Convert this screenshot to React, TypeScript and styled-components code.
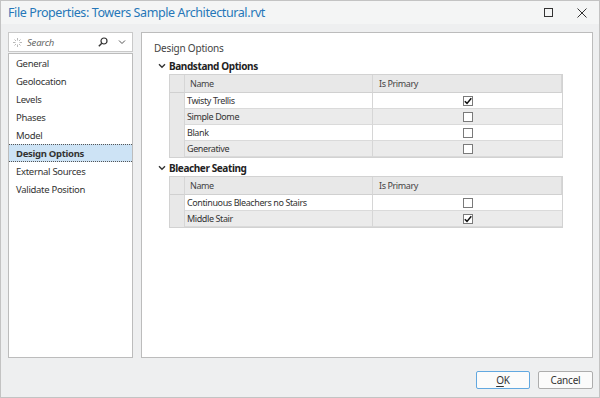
import styled, { createGlobalStyle } from "styled-components";

const GlobalStyle = createGlobalStyle`
  html, body {
    margin: 0;
    padding: 0;
    background: #ffffff;
  }
  body {
    font-family: "Noto Sans", "Open Sans", sans-serif;
    color: #222;
  }
`;

const Window = styled.div`
  width: 600px;
  height: 398px;
  box-sizing: border-box;
  border: 1px solid #c3c3c3;
  background: #eeeff0;
  display: flex;
  flex-direction: column;
`;

const TitleBar = styled.div`
  height: 23px;
  display: flex;
  align-items: center;
  padding-left: 7px;
  background: #f4f5f5;
`;

const Title = styled.div`
  flex: 1;
  font-size: 12.5px;
  letter-spacing: -0.4px;
  color: #2677b8;
`;

const WinButton = styled.button`
  width: 34px;
  height: 23px;
  border: none;
  background: transparent;
  display: flex;
  align-items: center;
  justify-content: center;
  padding: 0;
`;

const Body = styled.div`
  flex: 1;
  padding: 8px 6px 0 7px;
  display: flex;
  flex-direction: column;
`;

const Main = styled.div`
  height: 326px;
  display: flex;
  gap: 8px;
`;

const Side = styled.div`
  width: 125px;
  display: flex;
  flex-direction: column;
  gap: 1px;
`;

const SearchBox = styled.div`
  height: 20px;
  box-sizing: border-box;
  border: 1px solid #c9c9c9;
  background: #fff;
  display: flex;
  align-items: center;
  padding: 0 4px 0 4px;
  gap: 5px;
`;

const SearchText = styled.span`
  flex: 1;
  font-size: 9.5px;
  letter-spacing: -0.2px;
  font-style: italic;
  color: #666;
`;

const Nav = styled.div`
  flex: 1;
  border: 1px solid #bcbcbc;
  background: #fff;
`;

const NavItem = styled.div<{ $active?: boolean }>`
  height: 18px;
  box-sizing: border-box;
  display: flex;
  align-items: center;
  padding-left: 7px;
  font-size: 9.5px;
  letter-spacing: -0.3px;
  color: #333;
  font-weight: ${(p) => (p.$active ? 700 : 400)};
  background: ${(p) => (p.$active ? "#cde3f5" : "transparent")};
  border: 1px dotted ${(p) => (p.$active ? "#555" : "transparent")};
  border-left: none;
  border-right: none;
`;

const Panel = styled.div`
  flex: 1;
  border: 1px solid #bcbcbc;
  background: #fff;
  padding: 7px 0 0 12px;
`;

const PanelTitle = styled.div`
  font-size: 10px;
  letter-spacing: -0.2px;
  color: #444;
  height: 16px;
  line-height: 16px;
  margin-bottom: 2px;
`;

const Group = styled.div`
  margin-bottom: 2px;
`;

const GroupHead = styled.div`
  height: 16px;
  display: flex;
  align-items: center;
  gap: 3px;
  padding-left: 4px;
  font-size: 10px;
  letter-spacing: -0.4px;
  font-weight: 700;
  color: #222;
`;

const Table = styled.div`
  margin-left: 15px;
  width: 394px;
  box-sizing: border-box;
  border: 1px solid #d2d2d2;
  background: #e8e8e8;
  display: grid;
  grid-template-columns: 15px 188px 1fr;
  font-size: 9px;
  letter-spacing: -0.4px;
  color: #333;
`;

const HeadCell = styled.div<{ $pad?: number }>`
  height: 17px;
  display: flex;
  align-items: center;
  padding-left: ${(p) => p.$pad ?? 0}px;
  border-right: 1px solid #d6d6d6;
  border-bottom: 1px solid #d0d0d0;
  color: #444;
  &:last-child {
    border-right: none;
  }
`;

const Gutter = styled.div`
  background: #e8e8e8;
  border-right: 1px solid #d6d6d6;
`;

const Cell = styled.div<{ $alt?: boolean; $center?: boolean }>`
  height: 16px;
  box-sizing: border-box;
  display: flex;
  align-items: center;
  justify-content: ${(p) => (p.$center ? "center" : "flex-start")};
  padding-left: ${(p) => (p.$center ? 0 : 2)}px;
  background: ${(p) => (p.$alt ? "#ebebeb" : "#ffffff")};
  border-bottom: 1px solid #dadada;
  border-right: ${(p) => (p.$center ? "none" : "1px solid #d6d6d6")};
`;

const Box = styled.span`
  width: 10px;
  height: 10px;
  box-sizing: border-box;
  border: 1px solid #7a7a7a;
  background: #fff;
  display: flex;
  align-items: center;
  justify-content: center;
`;

const Footer = styled.div`
  display: flex;
  justify-content: flex-end;
  gap: 8px;
  padding-top: 13px;
`;

const Button = styled.button<{ $primary?: boolean }>`
  width: ${(p) => (p.$primary ? 54 : 55)}px;
  height: 18px;
  box-sizing: border-box;
  border: 1px solid ${(p) => (p.$primary ? "#62a8e0" : "#adadad")};
  border-radius: 2px;
  background: #fbfbfb;
  font-family: inherit;
  font-size: 10px;
  letter-spacing: -0.2px;
  color: #333;
  padding: 0;
  line-height: 1;

  u {
    text-decoration-thickness: 1px;
    text-underline-offset: 2px;
  }
`;

function Check() {
  return (
    <svg width="8" height="8" viewBox="0 0 8 8">
      <path d="M0.8 4.2 L3 6.4 L7.3 1.2" fill="none" stroke="#111" strokeWidth="1.5" />
    </svg>
  );
}

function Chevron() {
  return (
    <svg width="8" height="6" viewBox="0 0 8 6">
      <path d="M1 1.2 L4 4.2 L7 1.2" fill="none" stroke="#333" strokeWidth="1.4" />
    </svg>
  );
}

interface Option {
  name: string;
  primary: boolean;
}

const groups: { title: string; options: Option[] }[] = [
  {
    title: "Bandstand Options",
    options: [
      { name: "Twisty Trellis", primary: true },
      { name: "Simple Dome", primary: false },
      { name: "Blank", primary: false },
      { name: "Generative", primary: false },
    ],
  },
  {
    title: "Bleacher Seating",
    options: [
      { name: "Continuous Bleachers no Stairs", primary: false },
      { name: "Middle Stair", primary: true },
    ],
  },
];

const navItems = [
  "General",
  "Geolocation",
  "Levels",
  "Phases",
  "Model",
  "Design Options",
  "External Sources",
  "Validate Position",
];

export default function App() {
  return (
    <>
      <GlobalStyle />
      <Window>
        <TitleBar>
          <Title>File Properties: Towers Sample Architectural.rvt</Title>
          <WinButton>
            <svg width="9" height="9" viewBox="0 0 9 9">
              <rect x="0.5" y="0.5" width="8" height="8" fill="none" stroke="#333" strokeWidth="1" />
            </svg>
          </WinButton>
          <WinButton>
            <svg width="10" height="10" viewBox="0 0 10 10">
              <path d="M0.5 0.5 L9.5 9.5 M9.5 0.5 L0.5 9.5" stroke="#333" strokeWidth="1" />
            </svg>
          </WinButton>
        </TitleBar>
        <Body>
          <Main>
            <Side>
              <SearchBox>
                <svg width="9" height="9" viewBox="0 0 9 9">
                  <g stroke="#b8b8b8" strokeWidth="1">
                    <path d="M4.5 0 V2.5 M4.5 6.5 V9 M0 4.5 H2.5 M6.5 4.5 H9" />
                    <path d="M1.5 1.5 L3 3 M6 6 L7.5 7.5 M7.5 1.5 L6 3 M3 6 L1.5 7.5" />
                  </g>
                </svg>
                <SearchText>Search</SearchText>
                <svg width="10" height="10" viewBox="0 0 10 10">
                  <circle cx="6" cy="4" r="3" fill="none" stroke="#333" strokeWidth="1.2" />
                  <path d="M3.8 6.2 L0.8 9.2" stroke="#333" strokeWidth="1.4" />
                </svg>
                <svg width="12" height="8" viewBox="0 0 12 8" style={{ marginLeft: 3 }}>
                  <path d="M3 2.5 L6 5.5 L9 2.5" fill="none" stroke="#555" strokeWidth="1" />
                </svg>
              </SearchBox>
              <Nav>
                {navItems.map((item) => (
                  <NavItem key={item} $active={item === "Design Options"}>
                    {item}
                  </NavItem>
                ))}
              </Nav>
            </Side>
            <Panel>
              <PanelTitle>Design Options</PanelTitle>
              {groups.map((g) => (
                <Group key={g.title}>
                  <GroupHead>
                    <Chevron />
                    {g.title}
                  </GroupHead>
                  <Table>
                    <HeadCell />
                    <HeadCell $pad={5}>Name</HeadCell>
                    <HeadCell $pad={6}>Is Primary</HeadCell>
                    {g.options.map((o, i) => (
                      <>
                        <Gutter key={o.name + "-g"} />
                        <Cell key={o.name} $alt={i % 2 === 1}>
                          {o.name}
                        </Cell>
                        <Cell key={o.name + "-c"} $alt={i % 2 === 1} $center>
                          <Box>{o.primary && <Check />}</Box>
                        </Cell>
                      </>
                    ))}
                  </Table>
                </Group>
              ))}
            </Panel>
          </Main>
          <Footer>
            <Button $primary>
              <u>O</u>K
            </Button>
            <Button>Cancel</Button>
          </Footer>
        </Body>
      </Window>
    </>
  );
}
